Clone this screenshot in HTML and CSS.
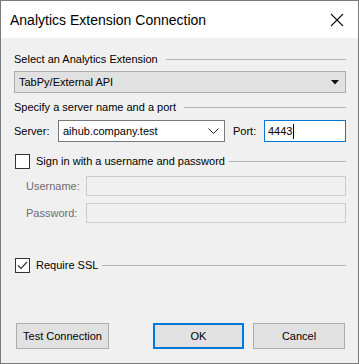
FILE: index.html
```html
<!DOCTYPE html>
<html>
<head>
    <title>Analytics Extension Connection</title>
    <link rel="stylesheet" href="styles.css">
</head>
<body>
    <div class="window">
        <div class="titlebar">
            <span class="title">Analytics Extension Connection</span>
            <svg class="close" width="14" height="14" viewBox="0 0 14 14">
                <path d="M1 1 L13 13 M13 1 L1 13" stroke="#111" stroke-width="1.1" fill="none"/>
            </svg>
        </div>

        <div class="content">
            <div class="section-head">
                <span>Select an Analytics Extension</span>
                <div class="rule"></div>
            </div>
            <div class="dropdown">
                <span>TabPy/External API</span>
                <svg width="8" height="5" viewBox="0 0 8 5"><path d="M0 0 H8 L4 4.5 Z" fill="#111"/></svg>
            </div>

            <div class="section-head second">
                <span>Specify a server name and a port</span>
                <div class="rule"></div>
            </div>
            <div class="server-row">
                <label class="server-label">Server:</label>
                <div class="combo">
                    <span>aihub.company.test</span>
                    <svg width="11" height="6" viewBox="0 0 11 6"><path d="M0.5 0.5 L5.5 5.5 L10.5 0.5" stroke="#222" stroke-width="1" fill="none"/></svg>
                </div>
                <label class="port-label">Port:</label>
                <div class="port">4443<span class="caret"></span></div>
            </div>

            <div class="check-head">
                <span class="checkbox"></span>
                <span>Sign in with a username and password</span>
                <div class="rule"></div>
            </div>
            <div class="field-row">
                <label>Username:</label>
                <div class="field"></div>
            </div>
            <div class="field-row">
                <label>Password:</label>
                <div class="field"></div>
            </div>

            <div class="check-head ssl">
                <span class="checkbox">
                    <svg width="13" height="13" viewBox="0 0 13 13"><path d="M2 6.5 L5 9.5 L11 3" stroke="#333" stroke-width="1.2" fill="none"/></svg>
                </span>
                <span>Require SSL</span>
                <div class="rule"></div>
            </div>

            <div class="buttons">
                <button class="test">Test Connection</button>
                <button class="primary">OK</button>
                <button class="cancel">Cancel</button>
            </div>
        </div>
    </div>
</body>
</html>
```

FILE: styles.css
```css
body {
    margin: 0;
    font-family: "Liberation Sans", Arial, sans-serif;
    font-size: 11px;
    color: #000;
}

.window {
    width: 359px;
    height: 364px;
    box-sizing: border-box;
    border: 1px solid #7a7a7a;
    display: flex;
    flex-direction: column;
    background-color: #f0f0f0;
}

.titlebar {
    height: 37px;
    background-color: #fff;
    display: flex;
    align-items: center;
    padding: 0 14px 0 9px;
}

.title {
    flex: 1;
    font-size: 14px;
    color: #000;
}

.content {
    flex: 1;
    display: flex;
    flex-direction: column;
    padding: 14px 12px 14px 13px;
}

.section-head,
.check-head {
    display: flex;
    align-items: center;
    line-height: 15px;
}

.rule {
    flex: 1;
    height: 1px;
    background-color: #b4b4b4;
    margin-left: 8px;
}

.dropdown {
    margin-top: 4px;
    height: 22px;
    box-sizing: border-box;
    border: 1px solid #adadad;
    background-color: #e1e1e1;
    display: flex;
    align-items: center;
    justify-content: space-between;
    padding: 0 6px 0 4px;
}

.section-head.second {
    margin-top: 7px;
}

.server-row {
    margin-top: 5px;
    display: flex;
    align-items: center;
    height: 22px;
}

.server-label {
    width: 44px;
}

.combo {
    width: 167px;
    height: 22px;
    box-sizing: border-box;
    border: 1px solid #7a7a7a;
    background-color: #fff;
    display: flex;
    align-items: center;
    justify-content: space-between;
    padding: 0 5px 0 4px;
}

.port-label {
    margin-left: 8px;
    width: 31px;
}

.port {
    flex: 1;
    height: 22px;
    box-sizing: border-box;
    border: 1px solid #0078d7;
    background-color: #fff;
    display: flex;
    align-items: center;
    padding-left: 3px;
}

.caret {
    display: inline-block;
    width: 1px;
    height: 15px;
    background-color: #000;
    margin-left: 1px;
}

.check-head {
    margin-top: 12px;
}

.checkbox {
    width: 15px;
    height: 15px;
    box-sizing: border-box;
    border: 1px solid #333;
    background-color: #fff;
    margin-left: 1px;
    margin-right: 6px;
    display: flex;
    align-items: center;
    justify-content: center;
}

.check-head .rule {
    margin-left: 4px;
}

.field-row {
    display: flex;
    align-items: center;
    margin-top: 7px;
    padding-left: 12px;
    color: #6d6d6d;
}

.field-row:first-of-type {
    margin-top: 10px;
}

.field-row label {
    width: 60px;
}

.field {
    flex: 1;
    height: 20px;
    box-sizing: border-box;
    border: 1px solid #cccccc;
}

.check-head.ssl {
    margin-top: 35px;
}

.buttons {
    margin-top: auto;
    display: flex;
    padding: 0 1px 0 2px;
}

button {
    height: 26px;
    box-sizing: border-box;
    font-family: "Liberation Sans", Arial, sans-serif;
    font-size: 11px;
    color: #000;
    background-color: #e1e1e1;
    border: 1px solid #adadad;
    padding: 0;
}

.test {
    width: 93px;
}

.primary {
    width: 91px;
    margin-left: auto;
    border: 2px solid #0078d7;
}

.cancel {
    width: 92px;
    margin-left: 9px;
}
```
